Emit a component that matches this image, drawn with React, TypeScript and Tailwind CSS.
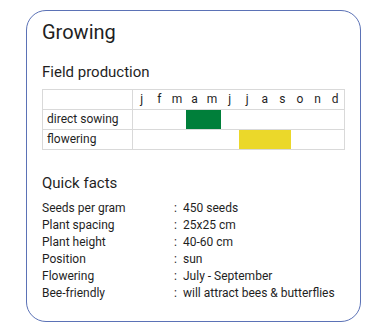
import React from "react";

const months = ["j", "f", "m", "a", "m", "j", "j", "a", "s", "o", "n", "d"];

const facts: [string, string][] = [
  ["Seeds per gram", "450 seeds"],
  ["Plant spacing", "25x25 cm"],
  ["Plant height", "40-60 cm"],
  ["Position", "sun"],
  ["Flowering", "July - September"],
  ["Bee-friendly", "will attract bees & butterflies"],
];

function Row({ label, start, end, color }: { label: string; start: number; end: number; color: string }) {
  return (
    <div className="flex h-[20px] border-t border-[#d9d9d9]">
      <div className="w-[90px] border-r border-[#d9d9d9] pl-[4px] text-[12px] leading-[19px]">{label}</div>
      <div className="flex-1 grid grid-cols-12">
        {months.map((_, i) => (
          <div key={i} className={i >= start && i < end ? color : ""} />
        ))}
      </div>
    </div>
  );
}

export default function App() {
  return (
    <div className="w-[369px] h-[331px] bg-white pt-[10px] pl-[26px] text-[#1f1f1f]" style={{ fontFamily: "Roboto, 'Noto Sans', sans-serif" }}>
      <div className="w-[335px] h-[312px] border border-[#5b72b6] rounded-[20px] px-[15px] pt-[9px]">
        <div className="text-[20px] leading-[24px]">Growing</div>
        <div className="mt-[19px] text-[15px] leading-[18px]">Field production</div>
        <div className="mt-[8px] border-x border-b border-[#d9d9d9]">
          <div className="flex h-[20px] border-t border-[#d9d9d9]">
            <div className="w-[90px] border-r border-[#d9d9d9]" />
            <div className="flex-1 grid grid-cols-12 text-[12px] leading-[19px] text-center">
              {months.map((m, i) => (
                <div key={i}>{m}</div>
              ))}
            </div>
          </div>
          <Row label="direct sowing" start={3} end={5} color="bg-[#007f3a]" />
          <Row label="flowering" start={6} end={9} color="bg-[#ebd82a]" />
        </div>
        <div className="mt-[24px] text-[15px] leading-[18px]">Quick facts</div>
        <div className="mt-[8px] text-[12px] leading-[17px]">
          {facts.map(([k, v]) => (
            <div key={k} className="flex">
              <div className="w-[132px]">{k}</div>
              <div className="w-[9px]">:</div>
              <div className="whitespace-nowrap">{v}</div>
            </div>
          ))}
        </div>
      </div>
    </div>
  );
}
